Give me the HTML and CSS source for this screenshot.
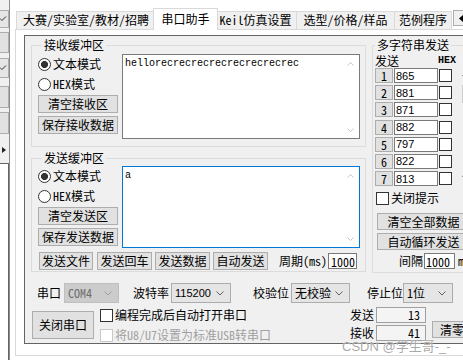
FILE: index.html
```html
<!DOCTYPE html>
<html lang="zh-CN">
<head>
  <meta charset="UTF-8">
  <meta name="viewport" content="width=device-width, initial-scale=1.0">
  <title>串口助手</title>
  <link rel="stylesheet" href="styles.css">
</head>
<body>
  <div class="window">
    <div class="side">
      <div class="side-item combo-edge i1"><svg width="8" height="6" viewBox="0 0 8 6"><path d="M1 2.5 L3 4.5 L7 0.5" fill="none" stroke="#333" stroke-width="1"/></svg></div>
      <div class="side-item i2"></div>
      <div class="side-item combo-edge i3"><svg width="8" height="6" viewBox="0 0 8 6"><path d="M1 2.5 L3 4.5 L7 0.5" fill="none" stroke="#333" stroke-width="1"/></svg></div>
      <div class="side-item i4"></div>
      <div class="side-item i5"></div>
      <div class="side-item i6"><svg width="5" height="6" viewBox="0 0 5 6"><path d="M0 0 L4 3 L0 6 Z" fill="#222"/></svg></div>
      <div class="side-list"></div>
    </div>

    <div class="tabs-area">
      <div class="tabs">
        <div class="tab t1">大赛/实验室/教材/招聘</div>
        <div class="tab t2 active">串口助手</div>
        <div class="tab t3">Keil仿真设置</div>
        <div class="tab t4">选型/价格/样品</div>
        <div class="tab t5">范例程序</div>
        <div class="tab-scroll"><svg width="5" height="7" viewBox="0 0 5 7"><path d="M4 0 L0 3.5 L4 7 Z" fill="#000"/></svg></div>
      </div>

      <div class="page">
        <div class="panel">
          <div class="top">
            <div class="buffers">
              <fieldset class="group recv">
                <legend>接收缓冲区</legend>
                <div class="buf-row">
                  <div class="buf-left">
                    <label class="radio"><input type="radio" name="rmode" checked>文本模式</label>
                    <label class="radio"><input type="radio" name="rmode">HEX模式</label>
                    <button class="btn side-btn">清空接收区</button>
                    <button class="btn side-btn second">保存接收数据</button>
                  </div>
                  <div class="textbox recv-box">
                    <div class="text">hellorecrecrecrecrecrecrecrec</div>
                    <div class="vscroll">
                      <svg width="7" height="4" viewBox="0 0 7 4"><path d="M0.5 3.5 L3.5 0.5 L6.5 3.5" fill="none" stroke="#c4c4c4"/></svg>
                      <svg width="7" height="4" viewBox="0 0 7 4"><path d="M0.5 0.5 L3.5 3.5 L6.5 0.5" fill="none" stroke="#c4c4c4"/></svg>
                    </div>
                  </div>
                </div>
              </fieldset>

              <fieldset class="group send">
                <legend>发送缓冲区</legend>
                <div class="buf-row">
                  <div class="buf-left">
                    <label class="radio"><input type="radio" name="smode" checked>文本模式</label>
                    <label class="radio"><input type="radio" name="smode">HEX模式</label>
                    <button class="btn side-btn">清空发送区</button>
                    <button class="btn side-btn second">保存发送数据</button>
                  </div>
                  <div class="textbox send-box">
                    <div class="text">a</div>
                    <div class="vscroll">
                      <svg width="7" height="4" viewBox="0 0 7 4"><path d="M0.5 3.5 L3.5 0.5 L6.5 3.5" fill="none" stroke="#c4c4c4"/></svg>
                      <svg width="7" height="4" viewBox="0 0 7 4"><path d="M0.5 0.5 L3.5 3.5 L6.5 0.5" fill="none" stroke="#c4c4c4"/></svg>
                    </div>
                  </div>
                </div>
                <div class="send-actions">
                  <button class="btn act">发送文件</button>
                  <button class="btn act">发送回车</button>
                  <button class="btn act">发送数据</button>
                  <button class="btn act">自动发送</button>
                  <span class="period">周期(ms)</span>
                  <input class="field period-input" value="1000">
                </div>
              </fieldset>
            </div>

            <fieldset class="group multi">
              <legend>多字符串发送</legend>
              <div class="multi-head"><span>发送</span><span class="hex">HEX</span></div>
              <div class="multi-body">
                <div class="multi-rows">
                  <div class="mrow"><button class="btn num">1</button><input class="field mval" value="865"><input type="checkbox" class="box"></div>
                  <div class="mrow"><button class="btn num">2</button><input class="field mval" value="881"><input type="checkbox" class="box"></div>
                  <div class="mrow"><button class="btn num">3</button><input class="field mval" value="871"><input type="checkbox" class="box"></div>
                  <div class="mrow"><button class="btn num">4</button><input class="field mval" value="882"><input type="checkbox" class="box"></div>
                  <div class="mrow"><button class="btn num">5</button><input class="field mval" value="797"><input type="checkbox" class="box"></div>
                  <div class="mrow"><button class="btn num">6</button><input class="field mval" value="822"><input type="checkbox" class="box"></div>
                  <div class="mrow"><button class="btn num">7</button><input class="field mval" value="813"><input type="checkbox" class="box"></div>
                </div>
                <div class="mscroll">
                  <svg width="7" height="5" viewBox="0 0 7 5"><path d="M0.5 4 L3.5 1 L6.5 4" fill="none" stroke="#606060" stroke-width="1.2"/></svg>
                  <div class="thumb"></div>
                  <svg class="down" width="7" height="5" viewBox="0 0 7 5"><path d="M0.5 1 L3.5 4 L6.5 1" fill="none" stroke="#606060" stroke-width="1.2"/></svg>
                </div>
              </div>
              <label class="check close-tip"><input type="checkbox" class="box">关闭提示</label>
              <button class="btn wide">清空全部数据</button>
              <button class="btn wide second">自动循环发送</button>
              <div class="interval">间隔<input class="field interval-input" value="1000"><span>ms</span></div>
            </fieldset>
          </div>

          <div class="port-row">
            <span class="lbl l-port">串口</span>
            <div class="combo disabled c-port"><span>COM4</span><svg width="8" height="5" viewBox="0 0 8 5"><path d="M0.5 0.5 L4 4 L7.5 0.5" fill="none" stroke="#a0a0a0"/></svg></div>
            <span class="lbl l-baud">波特率</span>
            <div class="combo c-baud"><span class="num-font">115200</span><svg width="8" height="5" viewBox="0 0 8 5"><path d="M0.5 0.5 L4 4 L7.5 0.5" fill="none" stroke="#606060"/></svg></div>
            <span class="lbl l-parity">校验位</span>
            <div class="combo c-parity"><span>无校验</span><svg width="8" height="5" viewBox="0 0 8 5"><path d="M0.5 0.5 L4 4 L7.5 0.5" fill="none" stroke="#606060"/></svg></div>
            <span class="lbl l-stop">停止位</span>
            <div class="combo c-stop"><span>1位</span><svg width="8" height="5" viewBox="0 0 8 5"><path d="M0.5 0.5 L4 4 L7.5 0.5" fill="none" stroke="#606060"/></svg></div>
          </div>

          <div class="lower">
            <button class="btn close-port">关闭串口</button>
            <div class="checks">
              <label class="check"><input type="checkbox" class="box">编程完成后自动打开串口</label>
              <label class="check disabled"><input type="checkbox" class="box" disabled>将U8/U7设置为标准USB转串口</label>
            </div>
            <div class="counts">
              <div class="count"><span>发送</span><span class="cbox">13</span></div>
              <div class="count"><span>接收</span><span class="cbox">41</span></div>
            </div>
            <button class="btn clear">清零</button>
          </div>
        </div>
      </div>
    </div>
  </div>
  <div class="watermark">CSDN @学生哥-_-</div>
</body>
</html>
```

FILE: styles.css
```css
* {
  box-sizing: border-box;
}

body {
  margin: 0;
  width: 463px;
  height: 360px;
  overflow: hidden;
  position: relative;
  background: #fff;
  font-family: "Noto Sans Mono CJK SC", "Noto Sans CJK SC", sans-serif;
  font-size: 12px;
  line-height: 14px;
  color: #000;
}

.window {
  display: flex;
  height: 360px;
}

/* strip of the neighbouring window */
.side {
  flex: none;
  width: 10px;
  height: 360px;
  padding-top: 10px;
  background: #f0f0f0;
  border-right: 1px solid #8c8c8c;
  overflow: hidden;
}

.side-item {
  display: flex;
  align-items: center;
  justify-content: flex-end;
  margin-left: -30px;
  width: 39px;
  border: 1px solid #adadad;
  background: #e1e1e1;
}

.combo-edge {
  background: #e5e5e5;
  padding-right: 1px;
}

.i1 { height: 18px; }
.i2 { height: 21px; margin-top: 4px; }
.i3 { height: 20px; margin-top: 5px; }
.i4 { height: 22px; margin-top: 8px; }
.i5 { height: 22px; margin-top: 4px; }
.i6 { height: 8px; margin-top: 12px; border: none; background: none; padding-right: 2px; }

.side-list {
  margin-top: 9px;
  margin-left: -30px;
  width: 39px;
  height: 220px;
  background: #fff;
  border: 1px solid #646464;
}

/* tabs */
.tabs-area {
  flex: none;
  width: 470px;
  margin-left: 5px;
}

.tabs {
  display: flex;
  align-items: flex-end;
  height: 29px;
  padding-left: 1px;
}

.tab {
  height: 18px;
  border: 1px solid #d9d9d9;
  border-bottom: none;
  background: #f0f0f0;
  text-align: center;
  line-height: 16px;
  white-space: nowrap;
}

.tab + .tab {
  margin-left: -1px;
}

.tab.active {
  position: relative;
  z-index: 1;
  height: 22px;
  margin: 0 -2px -1px -3px;
  background: #fff;
  line-height: 19px;
}

.t1 { width: 140px; }
.t2 { width: 65px; }
.t3 { width: 83px; margin-left: -2px !important; }
.t4 { width: 99px; }
.t5 { width: 58px; }

.tab-scroll {
  display: flex;
  align-items: center;
  justify-content: center;
  width: 17px;
  height: 16px;
  margin: 0 0 3px 1px;
  border: 1px solid #adadad;
  background: #f0f0f0;
}

.page {
  height: 327px;
  padding: 5px 0 0 8px;
  border: 1px solid #d9d9d9;
  background: #fff;
}

.panel {
  width: 470px;
  height: 309px;
  border: 1px solid #646464;
  background: #f0f0f0;
}

/* group boxes */
.top {
  display: flex;
  padding: 2px 0 0 6px;
}

.group {
  margin: 0;
  border: 1px solid #dcdcdc;
}

.group legend {
  padding: 0 2px;
  margin-left: 4px;
  line-height: 14px;
}

.buffers {
  width: 335px;
}

.recv {
  padding: 2px 5px 7px 6px;
}

.send {
  margin-top: 4px;
  padding: 1px 5px 1px 6px;
}

.buf-row {
  display: flex;
  gap: 4px;
}

.buf-left {
  display: flex;
  flex-direction: column;
  width: 80px;
}

.radio,
.check {
  display: flex;
  align-items: center;
  height: 20px;
  white-space: nowrap;
}

.radio input {
  appearance: none;
  width: 13px;
  height: 13px;
  margin: 0 2px 0 0;
  border: 1px solid #333;
  border-radius: 50%;
  background: #fff;
}

.radio input:checked {
  background: radial-gradient(circle, #333 0 3.3px, #fff 3.8px);
}

.box {
  appearance: none;
  width: 13px;
  height: 13px;
  margin: 0;
  border: 1px solid #333;
  background: #fff;
}

.check .box {
  margin-right: 2px;
}

.btn {
  padding: 0;
  font: inherit;
  line-height: 14px;
  color: #000;
  background: #e1e1e1;
  border: 1px solid #adadad;
  white-space: nowrap;
}

.side-btn {
  height: 18px;
  margin-top: 1px;
}

.side-btn.second {
  margin-top: 3px;
}

.textbox {
  display: flex;
  width: 238px;
  background: #fff;
  border: 1px solid #7a7a7a;
}

.recv-box {
  height: 85px;
}

.send-box {
  height: 82px;
  border-color: #0078d7;
}

.textbox .text {
  flex: 1;
  padding: 3px 0 0 2px;
  font-family: "Liberation Mono", monospace;
  font-size: 10px;
  line-height: 12px;
}

.vscroll {
  display: flex;
  flex-direction: column;
  justify-content: space-between;
  align-items: center;
  width: 17px;
  padding: 7px 0 6px;
}

.send-actions {
  display: flex;
  align-items: center;
  margin-top: 4px;
  padding-left: 1px;
}

.act {
  width: 55px;
  height: 18px;
  margin-right: 3px;
}

.act:first-child {
  width: 54px;
  margin-right: 4px;
}

.period {
  margin-left: 8px;
  white-space: nowrap;
}

.field {
  font: inherit;
  padding: 0 1px;
  background: #fff;
  border: 1px solid #7a7a7a;
  color: #000;
}

.period-input {
  width: 29px;
  height: 16px;
  margin-left: 1px;
  padding-left: 2px;
  line-height: 14px;
}

/* multi string send */
.multi {
  width: 110px;
  margin-left: 6px;
  padding: 1px 0 3px 2px;
}

.multi legend {
  margin-left: 0;
}

.multi-head {
  display: flex;
  justify-content: space-between;
  width: 81px;
  height: 14px;
  margin-top: 1px;
  line-height: 14px;
}

.multi-head .hex {
  font-family: "Liberation Mono", monospace;
  font-weight: bold;
  font-size: 10px;
}

.multi-body {
  display: flex;
}

.multi-rows {
  display: flex;
  flex-direction: column;
  gap: 2.2px;
  width: 81px;
}

.mrow {
  display: flex;
  align-items: center;
  height: 15px;
}

.num {
  width: 18px;
  height: 15px;
  line-height: 13px;
}

.mval {
  width: 44px;
  height: 15px;
  margin: 0 1px;
  font-family: "Liberation Sans", sans-serif;
  font-size: 11px;
  line-height: 13px;
}

.mscroll {
  display: flex;
  flex-direction: column;
  align-items: center;
  width: 17px;
  margin-left: 1px;
  padding-top: 4px;
}

.mscroll .thumb {
  width: 8px;
  height: 18px;
  margin-top: 8px;
  background: #cdcdcd;
}

.mscroll .down {
  margin-top: 72px;
}

.close-tip {
  margin-top: 2px;
  padding-left: 1px;
}

.wide {
  display: block;
  width: 93px;
  height: 17px;
  margin: 5px 0 0 2px;
  line-height: 15px;
}

.wide.second {
  margin-top: 3px;
}

.interval {
  display: flex;
  align-items: center;
  margin: 3px 0 0 24px;
  height: 16px;
  white-space: nowrap;
}

.interval-input {
  width: 31px;
  height: 16px;
  margin: 0 3px 0 1px;
  line-height: 14px;
}

/* port settings */
.port-row {
  display: flex;
  align-items: center;
  height: 20px;
  margin-top: 10px;
  padding-left: 12px;
}

.lbl {
  white-space: nowrap;
}

.combo {
  display: flex;
  align-items: center;
  justify-content: space-between;
  height: 20px;
  padding: 0 6px 0 3px;
  background: #e5e5e5;
  border: 1px solid #acacac;
}

.combo.disabled {
  background: #cccccc;
  border-color: #bfbfbf;
  color: #6d6d6d;
}

.num-font {
  font-family: "Liberation Sans", sans-serif;
  font-size: 11px;
}

.c-port { width: 55px; margin-left: 3px; }
.l-baud { margin-left: 14px; }
.c-baud { width: 60px; margin-left: 2px; }
.l-parity { margin-left: 22px; }
.c-parity { width: 59px; margin-left: 2px; }
.l-stop { margin-left: 17px; }
.c-stop { width: 50px; margin-left: 0; }

.lower {
  display: flex;
  align-items: flex-start;
  margin-top: 4px;
}

.close-port {
  width: 62px;
  height: 28px;
  margin: 4px 0 0 7px;
}

.checks {
  display: flex;
  flex-direction: column;
  gap: 4px;
  width: 250px;
  margin-left: 6px;
}

.checks .check {
  height: 16px;
}

.check.disabled {
  color: #a0a0a0;
}

.check.disabled .box {
  border-color: #c8c8c8;
}

.counts {
  display: flex;
  flex-direction: column;
  gap: 2px;
}

.count {
  display: flex;
  align-items: center;
  height: 16px;
}

.cbox {
  width: 50px;
  height: 16px;
  margin-left: 2px;
  padding-right: 5px;
  text-align: right;
  background: #f4f4f4;
  border: 1px solid #a0a0a0;
}

.clear {
  width: 40px;
  height: 17px;
  margin: 14px 0 0 6px;
}

.watermark {
  position: absolute;
  left: 342px;
  top: 340px;
  font-family: "Liberation Sans", "Noto Sans CJK SC", sans-serif;
  font-size: 13px;
  line-height: 13px;
  color: rgba(140, 140, 140, 0.75);
  text-shadow: 0 0 1px #fff;
}
```
